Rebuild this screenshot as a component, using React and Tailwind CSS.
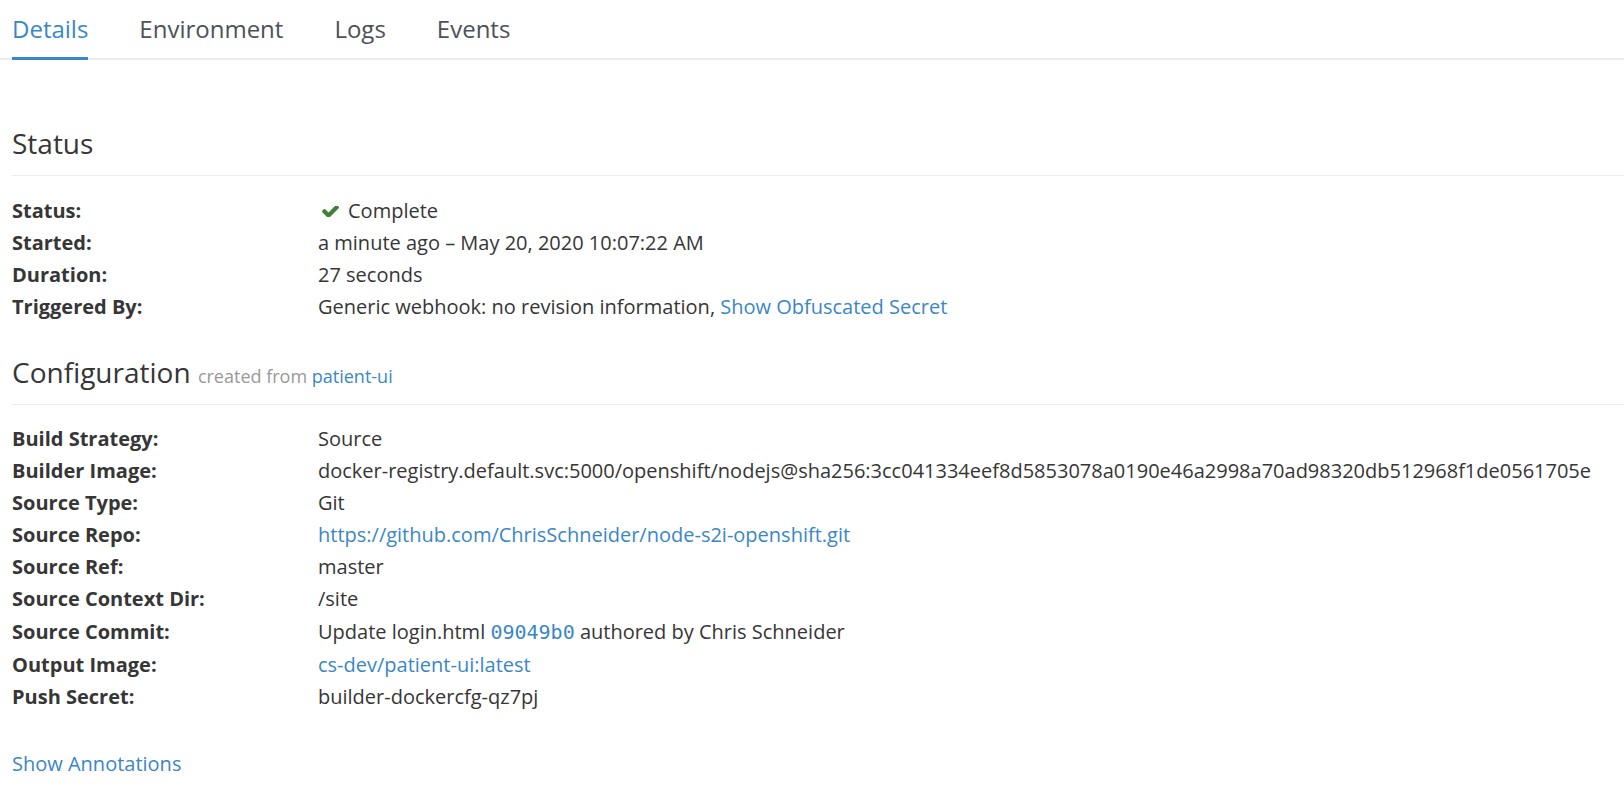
import React from "react";

const tabs = ["Details", "Environment", "Logs", "Events"];

const CheckIcon = () => (
  <svg
    viewBox="121 430 1550 1000"
    className="w-[17px] h-[11px] mr-[9px] ml-[4px] inline-block"
    fill="#3f7f3b"
  >
    <path d="M1671 566q0 40-28 68l-724 724-136 136q-28 28-68 28t-68-28l-136-136-362-362q-28-28-28-68t28-68l136-136q28-28 68-28t68 28l294 295 656-657q28-28 68-28t68 28l136 136q28 28 28 68z" />
  </svg>
);

const Link = ({ children, className = "" }) => (
  <a href="#" className={`text-[#3a87c8] no-underline ${className}`}>
    {children}
  </a>
);

const Row = ({ label, children, tall }) => (
  <div
    className={`flex ${tall ? "leading-[34px] h-[34px]" : "leading-[32px] h-[32px]"}`}
  >
    <div className="w-[306px] shrink-0 font-bold">{label}</div>
    <div className="flex items-center whitespace-nowrap">{children}</div>
  </div>
);

const Heading = ({ children, className = "" }) => (
  <h2
    className={`text-[28px] leading-[31px] h-[48px] font-normal text-[#363636] pb-[16px] border-b border-[#ececec] ${className}`}
  >
    {children}
  </h2>
);

export default function App() {
  return (
    <div className="min-h-screen bg-white font-['Open_Sans',sans-serif] text-[20px] text-[#363636] pl-[12px]">
      <ul className="flex gap-[51px] border-b-2 border-[#ececec] -ml-[12px] pl-[12px]">
        {tabs.map((t, i) => (
          <li
            key={t}
            className={`pt-[13px] pb-[12px] leading-[32px] text-[24px] -mb-[2px] border-b-[3px] ${
              i === 0
                ? "border-[#3a87c8] text-[#3a87c8]"
                : "border-transparent text-[#4d5258]"
            }`}
          >
            {t}
          </li>
        ))}
      </ul>

      <Heading className="mt-[68px]">Status</Heading>
      <div className="mt-[19px]">
        <Row label="Status:">
          <CheckIcon />
          Complete
        </Row>
        <Row label="Started:">a minute ago – May 20, 2020 10:07:22 AM</Row>
        <Row label="Duration:">27 seconds</Row>
        <Row label="Triggered By:">
          Generic webhook: no revision information,&nbsp;
          <Link>Show Obfuscated Secret</Link>
        </Row>
      </div>

      <Heading className="mt-[34px]">
        Configuration{" "}
        <small className="text-[18px] leading-none text-[#999]">
          created from <Link>patient-ui</Link>
        </small>
      </Heading>
      <div className="mt-[18px]">
        <Row label="Build Strategy:">Source</Row>
        <Row label="Builder Image:">
          docker-registry.default.svc:5000/openshift/nodejs@sha256:3cc041334eef8d5853078a0190e46a2998a70ad98320db512968f1de0561705e
        </Row>
        <Row label="Source Type:">Git</Row>
        <Row label="Source Repo:">
          <Link>https://github.com/ChrisSchneider/node-s2i-openshift.git</Link>
        </Row>
        <Row label="Source Ref:">master</Row>
        <Row label="Source Context Dir:">/site</Row>
        <Row label="Source Commit:" tall>
          Update login.html&nbsp;
          <Link className="font-['DejaVu_Sans_Mono',monospace] text-[20px]">
            09049b0
          </Link>
          &nbsp;authored by Chris Schneider
        </Row>
        <Row label="Output Image:">
          <Link>cs-dev/patient-ui:latest</Link>
        </Row>
        <Row label="Push Secret:">builder-dockercfg-qz7pj</Row>
      </div>

      <div className="mt-[35px] leading-[32px]">
        <Link>Show Annotations</Link>
      </div>
    </div>
  );
}
